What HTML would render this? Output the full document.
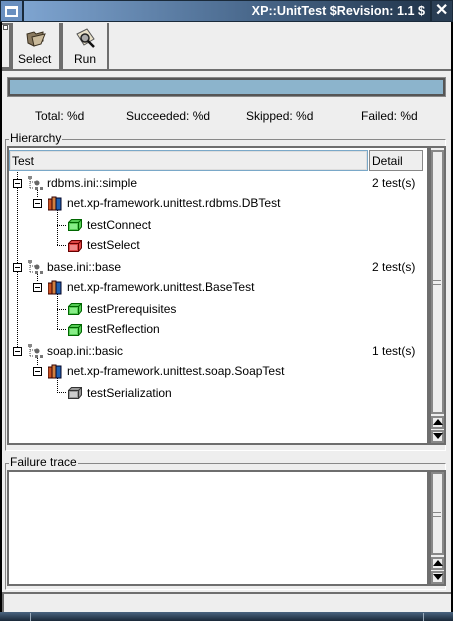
<!DOCTYPE html>
<html><head><meta charset="utf-8"><style>
*{margin:0;padding:0;box-sizing:border-box}
body{width:453px;height:621px;background:#eeeeee;font-family:"Liberation Sans",sans-serif;font-size:12px;color:#000;position:relative;overflow:hidden}
.a{position:absolute}
.t{position:absolute;white-space:nowrap;line-height:14px}
</style></head><body>
<div class="a" style="left:0;top:0;width:2px;height:621px;background:#000"></div>
<div class="a" style="right:0;top:0;width:2px;height:621px;background:#000"></div>
<div class="a" style="left:0;top:0;width:453px;height:22px;background:#1a2a3a"></div>
<div class="a" style="left:1px;top:1px;width:21px;height:20px;background:#6a90c0"></div>
<div class="a" style="left:5px;top:6px;width:13px;height:11px;border:2px solid #fff;border-top-width:3px"></div>
<div class="a" style="left:24px;top:1px;width:406px;height:20px;background:linear-gradient(to right,#7ea4d0,#4f6f94 50%,#22364c)"></div>
<div class="t" style="right:28px;top:4px;color:#fff;font-weight:bold;font-size:12.6px">XP::UnitTest $Revision: 1.1 $</div>
<div class="a" style="left:432px;top:1px;width:20px;height:20px;background:#2a3e54"></div>
<div class="t" style="left:435px;top:3px;color:#fff;font-weight:bold;font-size:16px;line-height:16px">✕</div>
<div class="a" style="left:2px;top:22px;width:449px;height:49px;background:#eee;border-bottom:2px solid #6e6e6e"></div>
<div class="a" style="left:2px;top:23px;width:9px;height:46px;border:2px solid #6e6e6e;border-left:none"></div>
<div class="a" style="left:3px;top:25px;width:5px;height:5px;border:1px solid #555;background:#fff"></div>
<div class="a" style="left:11px;top:23px;width:50px;height:46px;border-left:2px solid #6e6e6e;border-right:2px solid #6e6e6e"></div>
<div class="a" style="left:61px;top:23px;width:48px;height:46px;border-left:2px solid #6e6e6e;border-right:2px solid #6e6e6e"></div>
<svg class="a" style="left:26px;top:30px" width="22" height="18" viewBox="0 0 22 18"><path d="M1 4 L8 2 L10 4 L17 2 L17 11 L8 16 L2 13 Z" fill="#8a7a60" stroke="#3a3020"/><path d="M6 7 L19 4 L15 14 L8 16 Z" fill="#c9b99a" stroke="#3a3020"/></svg>
<div class="t" style="left:18px;top:52px">Select</div>
<svg class="a" style="left:75px;top:28px" width="22" height="22" viewBox="0 0 22 22"><path d="M2 6 L12 1 L19 11 L9 17 Z" fill="#e8e0c8" stroke="#555"/><circle cx="10" cy="10" r="4" fill="#aaa" stroke="#222" stroke-width="1.5"/><path d="M13 13 L19 19" stroke="#111" stroke-width="2.5"/></svg>
<div class="t" style="left:74px;top:52px">Run</div>
<div class="a" style="left:7px;top:77px;width:439px;height:20px;border:1px solid #888;background:#eee"></div>
<div class="a" style="left:8px;top:78px;width:437px;height:18px;border:2px solid #555;background:#8cb4cc"></div>
<div class="t" style="left:35px;top:109px">Total: %d</div>
<div class="t" style="left:126px;top:109px">Succeeded: %d</div>
<div class="t" style="left:246px;top:109px">Skipped: %d</div>
<div class="t" style="left:361px;top:109px">Failed: %d</div>
<div class="a" style="left:5px;top:139px;width:441px;height:312px;border:1px solid #888;border-right-color:#fff;border-bottom-color:#fff"></div>
<div class="t" style="left:9px;top:131px;background:#eee;padding:0 1px">Hierarchy</div>
<div class="a" style="left:7px;top:146px;width:422px;height:299px;border:2px solid #6e6e6e;background:#fff"></div>
<div class="a" style="left:9px;top:150px;width:359px;height:21px;border:1px solid #7aa8c8;background:#eee;box-shadow:inset 0 0 0 1px #ddd"></div>
<div class="t" style="left:12px;top:154px">Test</div>
<div class="a" style="left:369px;top:150px;width:54px;height:21px;border:1px solid #888;background:#eee"></div>
<div class="t" style="left:372px;top:154px">Detail</div>
<div class="a" style="left:429px;top:146px;width:17px;height:299px;background:#eee;border:2px solid #6e6e6e"></div>
<div class="a" style="left:431px;top:150px;width:13px;height:264px;border:2px solid #888;background:#eee"></div>
<div class="a" style="left:433px;top:280px;width:8px;height:5px;border-top:1px solid #888;border-bottom:1px solid #888"></div>
<div class="a" style="left:431px;top:416px;width:13px;height:13px;border:2px solid #888;background:#eee"></div>
<div class="a" style="left:433px;top:419px;width:0;height:0;border-left:5px solid transparent;border-right:5px solid transparent;border-bottom:6px solid #000"></div>
<div class="a" style="left:431px;top:430px;width:13px;height:13px;border:2px solid #888;background:#eee"></div>
<div class="a" style="left:433px;top:433px;width:0;height:0;border-left:5px solid transparent;border-right:5px solid transparent;border-top:6px solid #000"></div>
<svg class="a" style="left:9px;top:172px" width="120" height="230">
<g stroke="#000" stroke-dasharray="1,1" fill="none">
<line x1="8.5" y1="0" x2="8.5" y2="175"/>
<line x1="28.5" y1="16" x2="28.5" y2="26"/>
<line x1="28.5" y1="100" x2="28.5" y2="110"/>
<line x1="28.5" y1="184" x2="28.5" y2="194"/>
<line x1="48.5" y1="38" x2="48.5" y2="74"/><line x1="48" y1="53.5" x2="57" y2="53.5"/><line x1="48" y1="73.5" x2="57" y2="73.5"/>
<line x1="48.5" y1="122" x2="48.5" y2="158"/><line x1="48" y1="137.5" x2="57" y2="137.5"/><line x1="48" y1="157.5" x2="57" y2="157.5"/>
<line x1="48.5" y1="206" x2="48.5" y2="221"/><line x1="48" y1="220.5" x2="57" y2="220.5"/>
</g>
<g fill="#fff" stroke="#000">
<rect x="4.5" y="7.5" width="8" height="8"/><rect x="24.5" y="27.5" width="8" height="8"/>
<rect x="4.5" y="91.5" width="8" height="8"/><rect x="24.5" y="111.5" width="8" height="8"/>
<rect x="4.5" y="175.5" width="8" height="8"/><rect x="24.5" y="195.5" width="8" height="8"/>
</g>
<g stroke="#000"><line x1="6" y1="11.5" x2="11" y2="11.5"/><line x1="26" y1="31.5" x2="31" y2="31.5"/><line x1="6" y1="95.5" x2="11" y2="95.5"/><line x1="26" y1="115.5" x2="31" y2="115.5"/><line x1="6" y1="179.5" x2="11" y2="179.5"/><line x1="26" y1="199.5" x2="31" y2="199.5"/></g>
</svg>
<svg width="0" height="0" style="position:absolute"><defs>
<g id="node"><path d="M2 1 V12 M2 6 H7 M2 12 H6" stroke="#444" fill="none" stroke-dasharray="1,1"/><rect x="0" y="0" width="4" height="3" fill="#888"/><circle cx="9" cy="7" r="2.5" fill="#666"/><rect x="7" y="11" width="3" height="3" fill="#777"/><rect x="12" y="11" width="3" height="3" fill="#777"/></g>
<g id="books"><rect x="0" y="3" width="4" height="11" fill="#c85020" stroke="#300"/><rect x="4" y="1" width="4" height="13" fill="#d08040" stroke="#300"/><rect x="8" y="2" width="5" height="12" fill="#2060b0" stroke="#002"/></g>
</defs></svg>
<svg class="a" style="left:28px;top:176px" width="16" height="15"><use href="#node"/></svg>
<svg class="a" style="left:28px;top:260px" width="16" height="15"><use href="#node"/></svg>
<svg class="a" style="left:28px;top:344px" width="16" height="15"><use href="#node"/></svg>
<svg class="a" style="left:48px;top:196px" width="14" height="15"><use href="#books"/></svg>
<svg class="a" style="left:48px;top:280px" width="14" height="15"><use href="#books"/></svg>
<svg class="a" style="left:48px;top:364px" width="14" height="15"><use href="#books"/></svg>
<svg class="a" style="left:68px;top:219px" width="14" height="12"><path d="M0.5 3.5 L3.5 0.5 H13.5 V8 L10.5 11.5 H0.5 Z" fill="#5c5" stroke="#060"/><path d="M0.5 3.5 H10.5 V11.5 M10.5 3.5 L13.5 0.5" stroke="#060" fill="none"/><rect x="2" y="5" width="7" height="5" fill="#8e8"/></svg>
<svg class="a" style="left:68px;top:240px" width="14" height="12"><path d="M0.5 3.5 L3.5 0.5 H13.5 V8 L10.5 11.5 H0.5 Z" fill="#d44" stroke="#600"/><path d="M0.5 3.5 H10.5 V11.5 M10.5 3.5 L13.5 0.5" stroke="#600" fill="none"/><rect x="2" y="5" width="7" height="5" fill="#e88"/></svg>
<svg class="a" style="left:68px;top:303px" width="14" height="12"><path d="M0.5 3.5 L3.5 0.5 H13.5 V8 L10.5 11.5 H0.5 Z" fill="#5c5" stroke="#060"/><path d="M0.5 3.5 H10.5 V11.5 M10.5 3.5 L13.5 0.5" stroke="#060" fill="none"/><rect x="2" y="5" width="7" height="5" fill="#8e8"/></svg>
<svg class="a" style="left:68px;top:324px" width="14" height="12"><path d="M0.5 3.5 L3.5 0.5 H13.5 V8 L10.5 11.5 H0.5 Z" fill="#5c5" stroke="#060"/><path d="M0.5 3.5 H10.5 V11.5 M10.5 3.5 L13.5 0.5" stroke="#060" fill="none"/><rect x="2" y="5" width="7" height="5" fill="#8e8"/></svg>
<svg class="a" style="left:68px;top:387px" width="14" height="12"><path d="M0.5 3.5 L3.5 0.5 H13.5 V8 L10.5 11.5 H0.5 Z" fill="#999" stroke="#333"/><path d="M0.5 3.5 H10.5 V11.5 M10.5 3.5 L13.5 0.5" stroke="#333" fill="none"/><rect x="2" y="5" width="7" height="5" fill="#ccc"/></svg>
<div class="t" style="left:47px;top:176px">rdbms.ini::simple</div>
<div class="t" style="left:372px;top:176px">2 test(s)</div>
<div class="t" style="left:67px;top:196px">net.xp-framework.unittest.rdbms.DBTest</div>
<div class="t" style="left:87px;top:218px">testConnect</div>
<div class="t" style="left:87px;top:238px">testSelect</div>
<div class="t" style="left:47px;top:260px">base.ini::base</div>
<div class="t" style="left:372px;top:260px">2 test(s)</div>
<div class="t" style="left:67px;top:280px">net.xp-framework.unittest.BaseTest</div>
<div class="t" style="left:87px;top:302px">testPrerequisites</div>
<div class="t" style="left:87px;top:322px">testReflection</div>
<div class="t" style="left:47px;top:344px">soap.ini::basic</div>
<div class="t" style="left:372px;top:344px">1 test(s)</div>
<div class="t" style="left:67px;top:364px">net.xp-framework.unittest.soap.SoapTest</div>
<div class="t" style="left:87px;top:386px">testSerialization</div>
<div class="a" style="left:5px;top:463px;width:441px;height:127px;border:1px solid #888;border-right-color:#fff;border-bottom-color:#fff"></div>
<div class="t" style="left:9px;top:455px;background:#eee;padding:0 1px">Failure trace</div>
<div class="a" style="left:7px;top:470px;width:422px;height:116px;border:2px solid #6e6e6e;background:#fff"></div>
<div class="a" style="left:429px;top:470px;width:17px;height:116px;background:#eee;border:2px solid #6e6e6e"></div>
<div class="a" style="left:431px;top:472px;width:13px;height:83px;border:2px solid #888;background:#eee"></div>
<div class="a" style="left:433px;top:512px;width:8px;height:5px;border-top:1px solid #888;border-bottom:1px solid #888"></div>
<div class="a" style="left:431px;top:557px;width:13px;height:13px;border:2px solid #888;background:#eee"></div>
<div class="a" style="left:433px;top:560px;width:0;height:0;border-left:5px solid transparent;border-right:5px solid transparent;border-bottom:6px solid #000"></div>
<div class="a" style="left:431px;top:571px;width:13px;height:13px;border:2px solid #888;background:#eee"></div>
<div class="a" style="left:433px;top:574px;width:0;height:0;border-left:5px solid transparent;border-right:5px solid transparent;border-top:6px solid #000"></div>
<div class="a" style="left:2px;top:592px;width:449px;height:20px;border-top:2px solid #6e6e6e;border-left:2px solid #6e6e6e;background:#eee"></div>
<div class="a" style="left:0;top:612px;width:453px;height:9px;background:linear-gradient(#4a6480,#1a2838)"></div>
<div class="a" style="left:30px;top:613px;width:1px;height:8px;background:#9ab"></div>
<div class="a" style="left:423px;top:613px;width:1px;height:8px;background:#9ab"></div>
</body></html>
